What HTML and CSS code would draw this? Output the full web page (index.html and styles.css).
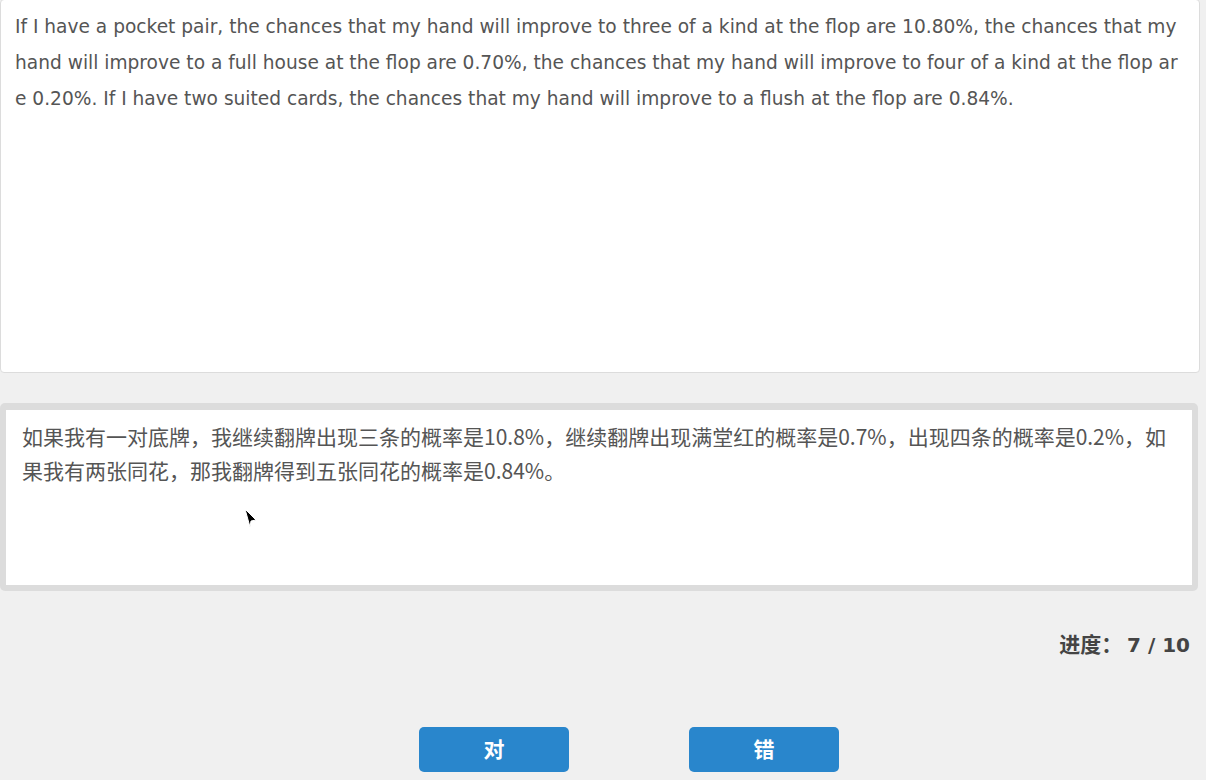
FILE: index.html
```html
<!DOCTYPE html>
<html lang="zh-CN">
<head>
<meta charset="utf-8">
<title>Review</title>
<link rel="stylesheet" href="styles.css">
</head>
<body>
<div class="page">
  <div class="source">If I have a pocket pair, the chances that my hand will improve to three of a kind at the flop are 10.80%, the chances that my hand will improve to a full house at the flop are 0.70%, the chances that my hand will improve to four of a kind at the flop are 0.20%. If I have two suited cards, the chances that my hand will improve to a flush at the flop are 0.84%.</div>
  <div class="target">
    <div class="target-inner">如果我有一对底牌，我继续翻牌出现三条的概率是10.8%，继续翻牌出现满堂红的概率是0.7%，出现四条的概率是0.2%，如果我有两张同花，那我翻牌得到五张同花的概率是0.84%。</div>
  </div>
  <div class="progress">进度：&nbsp;<span class="num">7 / 10</span></div>
  <div class="actions">
    <button class="btn">对</button>
    <button class="btn">错</button>
  </div>
</div>
<svg class="cursor" width="14" height="20" viewBox="0 0 14 20"><path d="M1 1 L12 12 L7 13 L6 19 Z" fill="#000" stroke="#fff" stroke-width="1"/></svg>
</body>
</html>
```
FILE: styles.css
```css
html, body {
  margin: 0;
  padding: 0;
  background: #f0f0f0;
  height: 100%;
  overflow: hidden;
}
body {
  font-family: "DejaVu Sans", "Noto Sans CJK SC", sans-serif;
  color: #555;
  position: relative;
}
.page {
  width: 1200px;
  display: flex;
  flex-direction: column;
}
.source {
  box-sizing: border-box;
  height: 374px;
  margin-top: -1px;
  background: #fff;
  border: 1px solid #dcdcdc;
  border-radius: 4px;
  padding: 9px 14px 8px 14px;
  font-size: 18.6px;
  line-height: 36px;
  word-break: break-all;
}
.target {
  box-sizing: border-box;
  width: 1198px;
  height: 188px;
  margin-top: 30px;
  background: #dcdcdc;
  border-radius: 5px;
  padding: 7px 6px 6px 6px;
}
.target-inner {
  box-sizing: border-box;
  height: 100%;
  background: #fff;
  padding: 9px 16px;
  font-family: "Noto Sans CJK SC", sans-serif;
  font-size: 21px;
  line-height: 34px;
  word-break: break-all;
}
.progress {
  margin-top: 39px;
  padding-right: 10px;
  text-align: right;
  font-family: "Noto Sans CJK SC", sans-serif;
  font-size: 21px;
  font-weight: bold;
  color: #444;
  line-height: 26px;
}
.num {
  font-family: "DejaVu Sans", sans-serif;
  font-size: 20px;
}
.actions {
  display: flex;
  justify-content: center;
  gap: 120px;
  margin-top: 69px;
  padding-left: 58px;
}
.btn {
  width: 150px;
  height: 45px;
  border: none;
  border-radius: 5px;
  background: #2986cc;
  color: #fff;
  font-family: "Noto Sans CJK SC", sans-serif;
  font-size: 21px;
  font-weight: bold;
  padding: 0 0 3px 0;
}
.cursor {
  position: absolute;
  left: 244px;
  top: 508px;
}
```
